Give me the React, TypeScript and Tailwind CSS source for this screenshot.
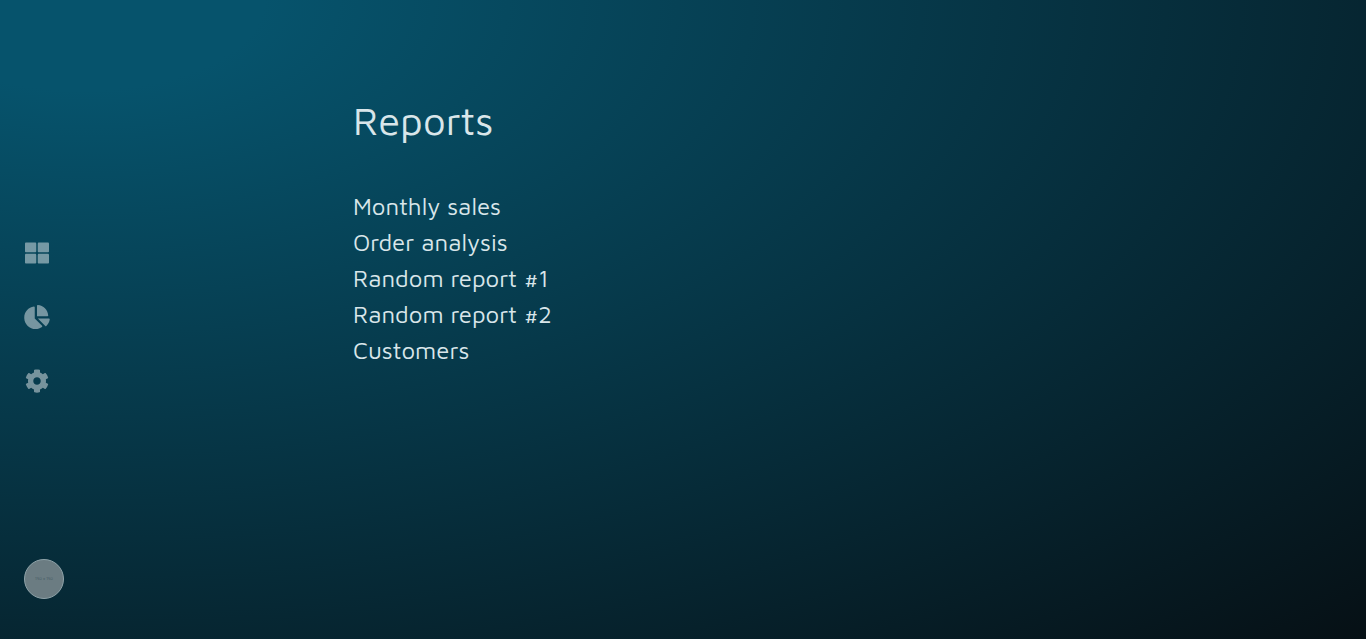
import { FaChartPie, FaCog, FaThLarge } from "react-icons/fa";

const links = [
  { label: "Dashboard", Icon: FaThLarge, size: "h-6 w-6" },
  { label: "Reports", Icon: FaChartPie, size: "h-6 w-[26px]" },
  { label: "Settings", Icon: FaCog, size: "h-6 w-6" },
];

const reports = [
  "Monthly sales",
  "Order analysis",
  "Random report #1",
  "Random report #2",
  "Customers",
];

export default function App() {
  return (
    <div className="grid min-h-screen grid-cols-[88px_1fr] bg-[radial-gradient(ellipse_farthest-corner_at_6%_0%,#06536c_10%,#061015_100%)] font-['Maven_Pro','Noto_Sans',sans-serif] text-[#d9e6ea]">
      <aside className="grid grid-rows-[1fr_auto_1fr] px-6 pb-10">
        <nav aria-label="Main" className="row-start-2 flex flex-col items-start gap-10 pt-[34px]">
          {links.map(({ label, Icon, size }) => (
            <a key={label} href="#" aria-label={label} className="flex w-[26px] justify-center text-white/45">
              <Icon aria-hidden="true" className={size} />
            </a>
          ))}
        </nav>
        <button
          type="button"
          aria-label="Account"
          className="row-start-3 flex size-10 items-center justify-center self-end rounded-full border border-[#8fa3a9] bg-[#6b7c82] text-[4px] text-[#40565e]"
        >
          150 x 150
        </button>
      </aside>
      <main className="mx-auto w-full max-w-[748px] pt-24">
        <h1 className="text-[40px] leading-[48px] font-light">Reports</h1>
        <ul className="pt-11 text-2xl leading-9 font-light">
          {reports.map((name) => (
            <li key={name}>
              <a href="#">{name}</a>
            </li>
          ))}
        </ul>
      </main>
    </div>
  );
}
